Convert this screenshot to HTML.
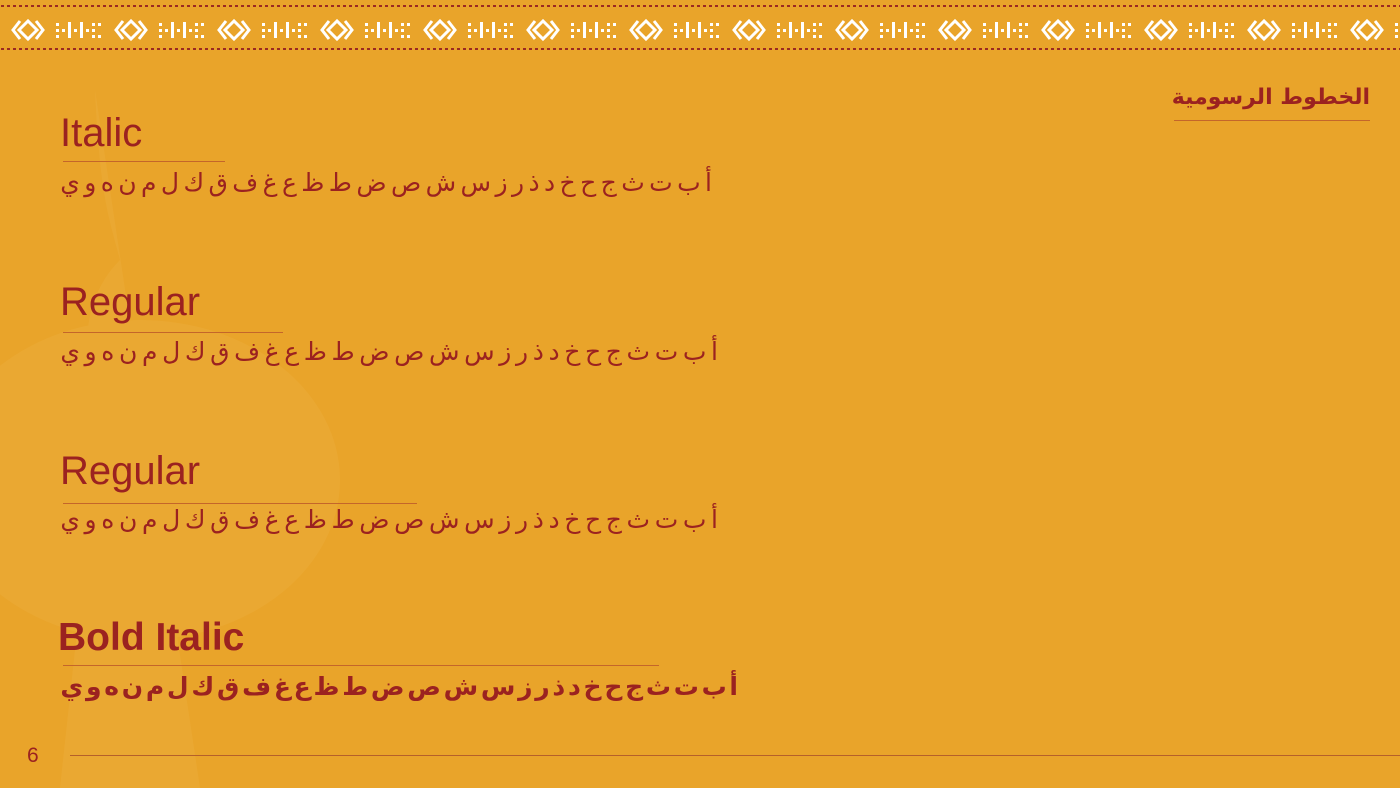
<!DOCTYPE html>
<html><head><meta charset="utf-8"><style>
html,body{margin:0;padding:0}
body{width:1400px;height:788px;background:#e9a42a;position:relative;overflow:hidden;font-family:"Liberation Sans","Noto Sans CJK SC",sans-serif;color:#9b2220}
.t{position:absolute;left:60px;font-size:40px;line-height:1;}
.ln{position:absolute;left:63px;height:1px;background:#c4662a}
.ar{position:absolute;left:60px;font-size:25px;line-height:1;direction:rtl;display:flex;justify-content:space-between;font-family:"DejaVu Sans",sans-serif}
</style></head><body>
<svg width="1400" height="60" style="position:absolute;left:0;top:0">
<defs>
<pattern id="dots" width="6" height="4" patternUnits="userSpaceOnUse"><rect x="1" y="0" width="3" height="3" fill="#9b2a22"/></pattern>
<pattern id="m" width="103" height="30" patternUnits="userSpaceOnUse" x="0" y="15">
<g fill="none" stroke="#fff" stroke-width="3">
<path d="M20 6 L13 15 L20 24"/><path d="M28 6 L19 15 L28 24 L37 15 Z"/><path d="M36 6 L43 15 L36 24"/>
</g>
<g fill="#fff">
<rect x="56" y="8" width="3" height="3"/><rect x="56" y="14" width="3" height="3"/><rect x="56" y="20" width="3" height="3"/>
<rect x="62" y="14" width="3" height="3"/>
<rect x="68" y="7" width="3" height="16"/>
<rect x="74" y="14" width="3" height="3"/>
<rect x="80" y="7" width="3" height="16"/>
<rect x="86" y="14" width="3" height="3"/>
<rect x="92" y="8" width="3" height="3"/><rect x="92" y="14" width="3" height="3"/><rect x="92" y="20" width="3" height="3"/>
<rect x="98" y="8" width="3" height="3"/><rect x="98" y="20" width="3" height="3"/>
</g>
</pattern>
</defs>
<rect x="0" y="5" width="1400" height="3" fill="url(#dots)"/>
<rect x="0" y="47" width="1400" height="3" fill="url(#dots)"/>
<rect x="0" y="15" width="1400" height="30" fill="url(#m)"/>
</svg>
<svg width="400" height="788" style="position:absolute;left:0;top:0;opacity:.05">
<ellipse cx="140" cy="480" rx="200" ry="160" fill="#fff0c0"/>
<path d="M95 90 C100 200 110 220 120 260 C80 300 80 360 100 420 L60 788 L200 788 Z" fill="#fff0c0"/>
</svg>
<div class="t" style="top:113px;font-weight:300">Italic</div>
<div class="ln" style="top:161px;width:162px"></div>
<div class="ar" style="top:170px;width:652px"><span>أ</span><span>ب</span><span>ت</span><span>ث</span><span>ج</span><span>ح</span><span>خ</span><span>د</span><span>ذ</span><span>ر</span><span>ز</span><span>س</span><span>ش</span><span>ص</span><span>ض</span><span>ط</span><span>ظ</span><span>ع</span><span>غ</span><span>ف</span><span>ق</span><span>ك</span><span>ل</span><span>م</span><span>ن</span><span>ه</span><span>و</span><span>ي</span></div>
<div class="t" style="top:282px">Regular</div>
<div class="ln" style="top:332px;width:220px"></div>
<div class="ar" style="top:339px;width:658px"><span>أ</span><span>ب</span><span>ت</span><span>ث</span><span>ج</span><span>ح</span><span>خ</span><span>د</span><span>ذ</span><span>ر</span><span>ز</span><span>س</span><span>ش</span><span>ص</span><span>ض</span><span>ط</span><span>ظ</span><span>ع</span><span>غ</span><span>ف</span><span>ق</span><span>ك</span><span>ل</span><span>م</span><span>ن</span><span>ه</span><span>و</span><span>ي</span></div>
<div class="t" style="top:451px">Regular</div>
<div class="ln" style="top:503px;width:354px"></div>
<div class="ar" style="top:507px;width:658px"><span>أ</span><span>ب</span><span>ت</span><span>ث</span><span>ج</span><span>ح</span><span>خ</span><span>د</span><span>ذ</span><span>ر</span><span>ز</span><span>س</span><span>ش</span><span>ص</span><span>ض</span><span>ط</span><span>ظ</span><span>ع</span><span>غ</span><span>ف</span><span>ق</span><span>ك</span><span>ل</span><span>م</span><span>ن</span><span>ه</span><span>و</span><span>ي</span></div>
<div class="t" style="top:618px;font-weight:bold;left:58px;font-size:39px">Bold Italic</div>
<div class="ln" style="top:665px;width:596px"></div>
<div class="ar" style="top:674px;width:678px;font-weight:bold"><span>أ</span><span>ب</span><span>ت</span><span>ث</span><span>ج</span><span>ح</span><span>خ</span><span>د</span><span>ذ</span><span>ر</span><span>ز</span><span>س</span><span>ش</span><span>ص</span><span>ض</span><span>ط</span><span>ظ</span><span>ع</span><span>غ</span><span>ف</span><span>ق</span><span>ك</span><span>ل</span><span>م</span><span>ن</span><span>ه</span><span>و</span><span>ي</span></div>
<div style="position:absolute;right:30px;top:85px;font-size:22px;font-weight:bold;direction:rtl;font-family:'DejaVu Sans',sans-serif">الخطوط الرسومية</div>
<div style="position:absolute;left:1174px;top:120px;width:196px;height:1px;background:#c4662a"></div>
<div style="position:absolute;left:27px;top:744px;font-size:21px">6</div>
<div style="position:absolute;left:70px;top:755px;width:1330px;height:1px;background:#b5602a"></div>
</body></html>
